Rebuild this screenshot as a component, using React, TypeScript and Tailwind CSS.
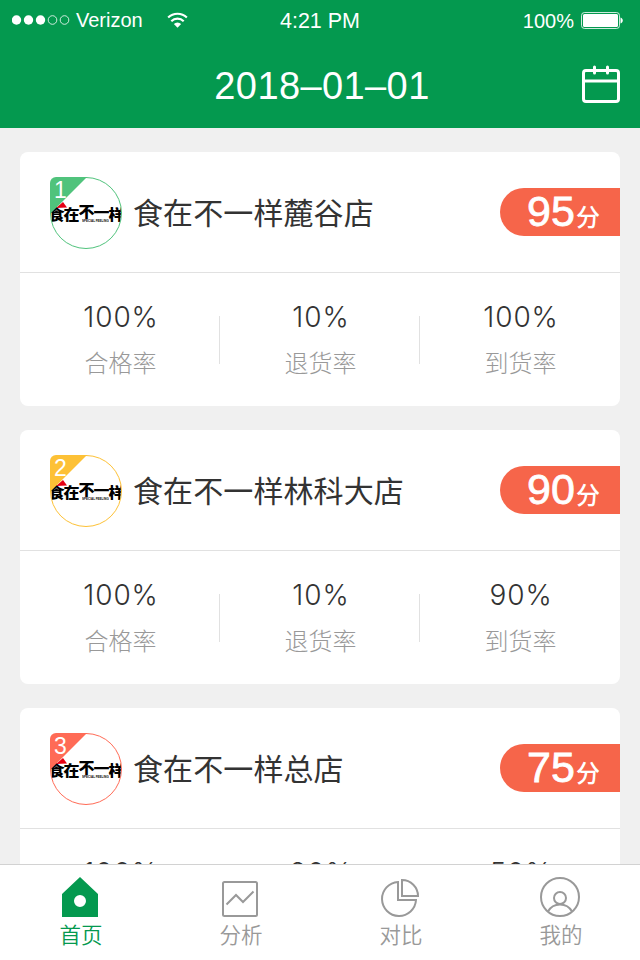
const stores = [
  {
    rank: 1,
    name: '食在不一样麓谷店',
    score: 95,
    border: 'border-[#50c37c]',
    fill: 'fill-[#50c37c]',
    stats: ['100%', '10%', '100%'],
  },
  {
    rank: 2,
    name: '食在不一样林科大店',
    score: 90,
    border: 'border-[#fdc136]',
    fill: 'fill-[#fdc136]',
    stats: ['100%', '10%', '90%'],
  },
  {
    rank: 3,
    name: '食在不一样总店',
    score: 75,
    border: 'border-[#ff6b56]',
    fill: 'fill-[#ff6b56]',
    stats: ['100%', '20%', '50%'],
  },
]

const labels = ['合格率', '退货率', '到货率']

function StatusBar() {
  return (
    <div className="grid h-10 grid-cols-3 items-center font-['Liberation_Sans',sans-serif] text-[20px] leading-none">
      <div className="flex items-center pl-3">
        <svg width="58" height="10" viewBox="0 0 58 10" fill="none" stroke="white">
          <circle cx="4.5" cy="5" r="4.7" fill="white" stroke="none" />
          <circle cx="16.5" cy="5" r="4.7" fill="white" stroke="none" />
          <circle cx="28.5" cy="5" r="4.7" fill="white" stroke="none" />
          <circle cx="40.5" cy="5" r="4.3" strokeWidth="0.8" />
          <circle cx="52.5" cy="5" r="4.3" strokeWidth="0.8" />
        </svg>
        <span className="ml-1.5">Verizon</span>
        <svg className="ml-6" width="21" height="16" viewBox="0 0 22 16" fill="none" stroke="white" strokeWidth="2.2">
          <path d="M1.2 5.5a13.8 13.8 0 0 1 19.6 0" />
          <path d="M4.5 9.2a9.2 9.2 0 0 1 13 0" />
          <path d="M11 16 7.2 12.3a5.3 5.3 0 0 1 7.6 0Z" fill="white" stroke="none" />
        </svg>
      </div>
      <div className="pt-[3px] text-center text-[21.5px]">4:21 PM</div>
      <div className="flex items-center justify-end pr-[17px]">
        <span className="pt-0.5">100%</span>
        <svg className="ml-[7px]" width="42" height="17" viewBox="0 0 42 17" fill="none">
          <rect x="0.5" y="0.5" width="38" height="16" rx="3" stroke="white" strokeOpacity="0.8" />
          <rect x="2" y="2" width="35" height="13" rx="1.5" fill="white" />
          <path d="M39.5 5.5c3 .8 3 5.2 0 6Z" fill="white" />
        </svg>
      </div>
    </div>
  )
}

function Avatar({ store }: { store: (typeof stores)[number] }) {
  return (
    <div className="relative mt-px size-[72px] shrink-0">
      <div className={`flex size-full items-center justify-center overflow-hidden rounded-full border ${store.border}`}>
        <div className="flex w-[75px] shrink-0 scale-y-90 font-['Noto_Sans_CJK_SC',sans-serif] text-[16px] leading-5 font-black tracking-[-1px] text-black">
          <span className="mt-0.5">食</span>
          <span className="mt-0.5">在</span>
          <span className="-mt-0.5">不</span>
          <span>一</span>
          <span className="mt-0.5">样</span>
        </div>
      </div>
      <span className="absolute top-[43px] left-[32px] origin-top-left scale-[0.3] font-['Liberation_Sans',sans-serif] text-[10px] leading-[10px] font-bold whitespace-nowrap text-black">
        SPECIAL FEELING
      </span>
      <svg className="absolute top-0 left-0" width="38" height="38" viewBox="0 0 38 38">
        <path d="M6 31 13 25l4 5.5Z" fill="#e60012" />
        <path d="M6 0h31L0 37V6a6 6 0 0 1 6-6Z" className={store.fill} />
      </svg>
      <span className="absolute top-[2px] left-1 w-3 text-center font-['Liberation_Sans',sans-serif] text-[23px] leading-[22px] text-white">
        {store.rank}
      </span>
    </div>
  )
}

function StoreCard({ store }: { store: (typeof stores)[number] }) {
  return (
    <div className="h-[254px] shrink-0 rounded-lg bg-white">
      <div className="flex h-[121px] items-center border-b border-[#e1e1e1] pl-[30px]">
        <Avatar store={store} />
        <h2 className="-mt-[3px] ml-[11px] text-[30px] leading-10 tracking-[0.1px] text-[#333]">{store.name}</h2>
        <div className="ml-auto flex h-12 w-[120px] items-center rounded-l-full bg-[#f6654a] pl-[27px] text-white">
          <span className="-mt-0.5 w-12 font-['Liberation_Sans',sans-serif] text-[43px] leading-none [-webkit-text-stroke:0.8px_white]">{store.score}</span>
          <span className="mt-2 ml-px text-[24px] leading-none font-medium">分</span>
        </div>
      </div>
      <div className="grid grid-cols-3 pt-[22px]">
        {store.stats.map((value, i) => (
          <div key={i} className="relative flex flex-col items-center">
            <span className="pt-px pl-0.5 font-['Inter',sans-serif] text-[28px] leading-[42px] font-light tracking-[0.9px] text-[#333]">{value}</span>
            <span className="mt-[3px] pl-px text-[24px] leading-[42px] font-light text-[#999]">{labels[i]}</span>
            {i < 2 && <i className="absolute top-[21px] right-0 h-12 w-px bg-[#e1e1e1]" />}
          </div>
        ))}
      </div>
    </div>
  )
}

const tabs = [
  {
    label: '首页',
    icon: <path d="M20 0 38 17v23H2V17ZM20 18a6 6 0 1 0 0 12 6 6 0 0 0 0-12Z" fill="currentColor" fillRule="evenodd" stroke="none" />,
  },
  {
    label: '分析',
    icon: (
      <>
        <rect x="3" y="5" width="34" height="34" rx="1.5" />
        <path d="m6.5 27.5 9.5-9.5 7 7L33.5 14.5" />
      </>
    ),
  },
  {
    label: '对比',
    icon: (
      <>
        <path d="M18 5A17 17 0 1 0 36 23H18Z" />
        <path d="M22 3v16h16A16 16 0 0 0 22 3Z" />
      </>
    ),
  },
  {
    label: '我的',
    icon: (
      <>
        <circle cx="20" cy="20" r="19" />
        <circle cx="20" cy="21" r="6" />
        <path d="M8 34.5c2.5-4.5 7-7 12-7s9.5 2.5 12 7" />
      </>
    ),
  },
]

export default function App() {
  return (
    <div className="flex h-[960px] w-[640px] flex-col overflow-hidden bg-[#f0f0f0] font-['Noto_Sans_CJK_SC',sans-serif]">
      <header className="h-32 shrink-0 bg-[#04994f] text-white">
        <StatusBar />
        <div className="grid h-[88px] grid-cols-[1fr_auto_1fr] items-center">
          <span />
          <h1 className="pt-1 pl-1 font-['Liberation_Sans',sans-serif] text-[38px] leading-none tracking-[0.4px]">2018–01–01</h1>
          <svg className="mr-5 justify-self-end" width="38" height="38" viewBox="0 0 38 38" fill="none" stroke="white" strokeWidth="3" strokeLinecap="round">
            <rect x="1.5" y="5.5" width="35" height="31" rx="2.5" />
            <path d="M2 16h34M12.5 2v6M25.5 2v6" />
          </svg>
        </div>
      </header>

      <main className="flex min-h-0 flex-1 flex-col gap-6 overflow-hidden px-5 pt-6">
        {stores.map((store) => (
          <StoreCard key={store.rank} store={store} />
        ))}
      </main>

      <nav className="grid h-24 shrink-0 grid-cols-4 border-t border-[#d2d2d2] bg-white">
        {tabs.map((tab, i) => (
          <div key={tab.label} className={`flex flex-col items-center pt-3 ${i === 0 ? 'text-[#04994f]' : 'text-[#999]'}`}>
            <svg width="40" height="40" viewBox="0 0 40 40" fill="none" stroke="currentColor" strokeWidth="2">
              {tab.icon}
            </svg>
            <span className="mt-[3px] pl-0.5 text-[21.5px] leading-7 font-[350]">{tab.label}</span>
          </div>
        ))}
      </nav>
    </div>
  )
}
